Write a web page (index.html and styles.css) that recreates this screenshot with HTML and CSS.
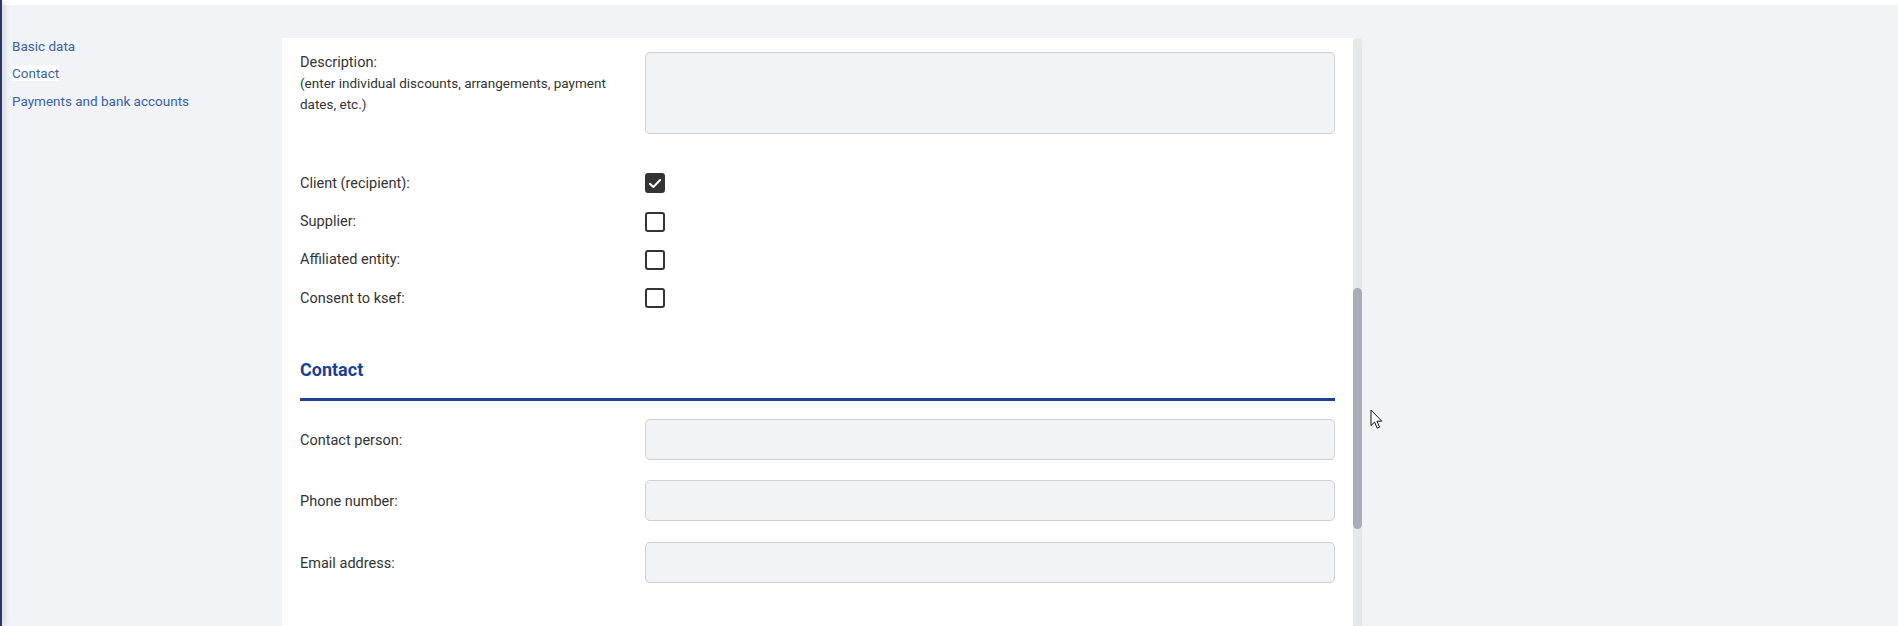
FILE: index.html
```html
<!DOCTYPE html>
<html lang="en">
<head>
<meta charset="utf-8">
<title>Contractor form</title>
<link rel="stylesheet" href="styles.css">
</head>
<body>
<div class="edge"></div>
<div class="topbar"></div>
<div class="main">
  <nav class="sidebar">
    <a class="nav-link">Basic data</a>
    <a class="nav-link active">Contact</a>
    <a class="nav-link">Payments and bank accounts</a>
  </nav>
  <section class="card">
    <div class="desc-row">
      <div class="desc-label">Description:<span class="hint">(enter individual discounts, arrangements, payment dates, etc.)</span></div>
      <div class="textarea"></div>
    </div>
    <div class="checks">
      <div class="check-row"><div class="label">Client (recipient):</div><div class="box checked"><svg viewBox="0 0 20 20" width="17" height="17"><path d="M3.6 10.4 L8 14.4 L16.4 5.6" fill="none" stroke="#fff" stroke-width="2.4" stroke-linecap="round" stroke-linejoin="round"/></svg></div></div>
      <div class="check-row"><div class="label">Supplier:</div><div class="box"></div></div>
      <div class="check-row"><div class="label">Affiliated entity:</div><div class="box"></div></div>
      <div class="check-row"><div class="label">Consent to ksef:</div><div class="box"></div></div>
    </div>
    <h2 class="section-title">Contact</h2>
    <div class="inputs">
      <div class="input-row"><div class="label">Contact person:</div><div class="input"></div></div>
      <div class="input-row"><div class="label">Phone number:</div><div class="input"></div></div>
      <div class="input-row"><div class="label">Email address:</div><div class="input"></div></div>
    </div>
  </section>
  <div class="scrolltrack"><div class="thumb"></div></div>
</div>
<svg class="cursor" width="14" height="22" viewBox="0 0 14 22"><path d="M1 1 L1 16.5 L4.6 13 L7.2 19.2 L9.6 18.2 L7 12.2 L11.8 12.2 Z" fill="#fff" stroke="#111" stroke-width="1" stroke-linejoin="round"/></svg>
</body>
</html>
```

FILE: styles.css
```css
html, body {
  margin: 0;
  padding: 0;
}
body {
  background: #f2f3f7;
  font-family: Roboto, "Liberation Sans", sans-serif;
  color: #333;
  height: 626px;
  overflow: hidden;
}
.edge {
  position: fixed;
  left: 0;
  top: 0;
  bottom: 0;
  width: 2px;
  background: #2a3760;
  box-shadow: 1px 0 6px rgba(20, 30, 60, 0.35);
}
.topbar {
  height: 5px;
  background: #fff;
}
.main {
  display: flex;
  align-items: flex-start;
  padding-top: 33px;
}
.sidebar {
  width: 282px;
  box-sizing: border-box;
  padding-left: 12px;
  display: flex;
  flex-direction: column;
  align-items: flex-start;
  gap: 11.35px;
}
.nav-link {
  font-size: 13.5px;
  line-height: 16px;
  color: #3b62a4;
  cursor: pointer;
}
.nav-link.active {
  background: #fff;
}
.card {
  width: 1071px;
  box-sizing: border-box;
  height: 588px;
  overflow: hidden;
  background: #fff;
  padding: 14px 18px 0;
}
.desc-row {
  display: flex;
}
.desc-label {
  width: 345px;
  box-sizing: border-box;
  padding-right: 18px;
  font-size: 14.5px;
  line-height: 21px;
}
.hint {
  display: block;
  font-size: 13.5px;
}
.textarea, .input {
  width: 690px;
  box-sizing: border-box;
  border: 1px solid #cfcfcf;
  border-radius: 5px;
  background: #f2f3f7;
}
.textarea {
  height: 82px;
}
.checks {
  margin-top: 30px;
  display: flex;
  flex-direction: column;
}
.check-row, .input-row {
  display: flex;
  align-items: center;
}
.check-row {
  height: 38.4px;
}
.label {
  width: 345px;
  font-size: 14.5px;
  line-height: 21px;
}
.input-row .label {
  padding-top: 2px;
}
.box {
  width: 20px;
  height: 20px;
  box-sizing: border-box;
  border: 2px solid #333;
  border-radius: 3px;
  background: #fff;
  display: flex;
  align-items: center;
  justify-content: center;
}
.box.checked {
  background: #333;
}
.section-title {
  margin: 40px 0 0;
  font-size: 18px;
  line-height: 24px;
  font-weight: 700;
  color: #1a4191;
  padding-bottom: 16px;
  border-bottom: 3px solid #1a4393;
}
.inputs {
  margin-top: 18px;
  display: flex;
  flex-direction: column;
  gap: 20.5px;
}
.input {
  height: 41px;
}
.scrolltrack {
  width: 9px;
  height: 588px;
  background: #e6e7eb;
  border-radius: 5px 5px 0 0;
  padding-top: 250px;
  box-sizing: border-box;
}
.thumb {
  height: 241px;
  background: #a9aeb6;
  border-radius: 5px;
}
.cursor {
  position: absolute;
  left: 1370px;
  top: 409px;
}
```
